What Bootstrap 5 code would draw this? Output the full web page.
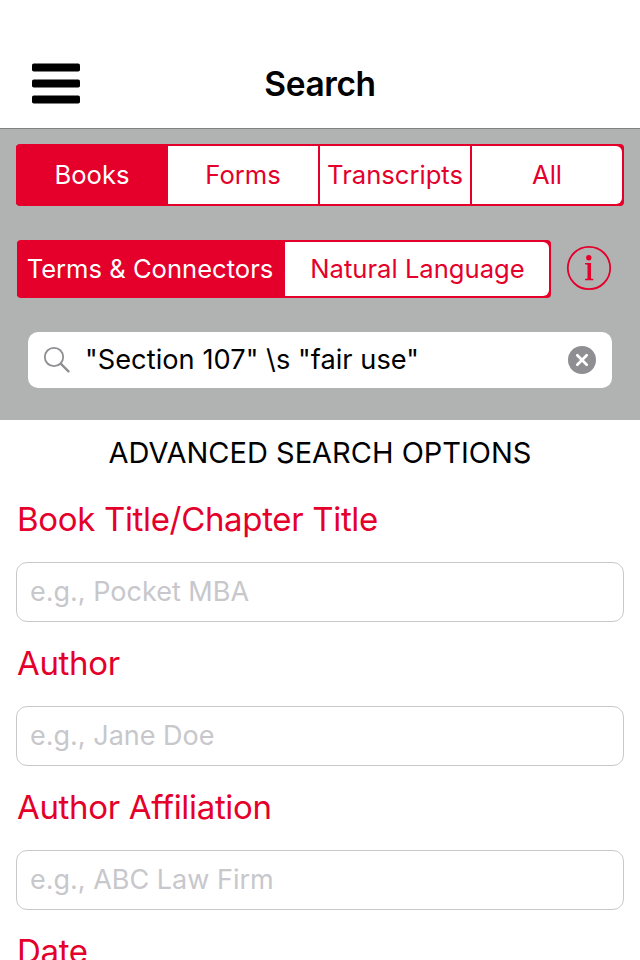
<!DOCTYPE html>
<html lang="en">
<head>
<meta charset="utf-8">
<meta name="viewport" content="width=device-width, initial-scale=1">
<title>Search</title>
<link rel="stylesheet" href="https://cdn.jsdelivr.net/npm/bootstrap@5.3.0/dist/css/bootstrap.min.css">
<style>
:root{--brand:#e4002b}
body{font-family:Inter,"Liberation Sans",sans-serif;width:640px;height:960px;overflow:hidden;color:#000;background:#fff}
.topbar{height:129px;padding-top:40px;border-bottom:1px solid #818282}
.menu-btn{left:32px;top:63px;width:48px;height:41px}
.page-title{font-size:33.5px;font-weight:600;line-height:88px;letter-spacing:-.4px}
.search-panel{background:#b1b3b3;height:291px;padding:15px 16px 32px}
.seg{display:grid;background:var(--brand);border-radius:4px;padding:2px 2px 2px 0}
.seg .btn{--bs-btn-color:var(--brand);--bs-btn-bg:#fff;--bs-btn-active-bg:var(--brand);--bs-btn-active-color:#fff;--bs-btn-border-width:0;--bs-btn-border-radius:0;--bs-btn-padding-x:0;--bs-btn-padding-y:0;font-size:25.6px;line-height:1;white-space:nowrap}
.seg .btn:not(.active):not(:last-child){border-right:2px solid var(--brand)}
.seg .btn:last-child{border-radius:0 6px 6px 0}
.seg-scope{height:62px;grid-template-columns:152px 152px 152px 150px}
.seg-mode{height:58px;width:534px;margin-left:1px;grid-template-columns:268px 264px}
.seg-mode .btn{padding-left:1px}
.seg-mode .btn.active{padding:0 2px 0 0}
.mode-row{margin-top:34px}
.info-btn{margin:-2px 0 0 15px}
.search-box{height:56px;margin:34px 12px 0;border-radius:10px;padding:0 16px 0 15px}
.query{font-size:27.2px;letter-spacing:.05px;margin:-1px 0 0 14px;line-height:1}
.adv-head{font-size:29px;line-height:40px;padding-top:13px}
.fields{padding-top:26px}
.field{padding:0 16px;height:144px}
.field-label{font-size:33px;line-height:40px;letter-spacing:-.33px;color:var(--brand);padding-left:1px}
.field .form-control{height:60px;margin-top:23px;border:1px solid #c9c9cb;border-radius:11px;padding:0 13px 2px;font-size:27px}
.field .form-control::placeholder{color:#c7c7cc;opacity:1}
</style>
<script src="https://cdn.jsdelivr.net/npm/bootstrap@5.3.0/dist/js/bootstrap.bundle.min.js"></script>
</head>
<body>
<header class="topbar position-relative text-center">
<svg class="menu-btn position-absolute" viewBox="0 0 48 41"><rect y=".4" width="48" height="8.200" rx="1.800"/><rect y="16.400" width="48" height="8.200" rx="1.800"/><rect y="32.400" width="48" height="8.200" rx="1.800"/></svg>
<h1 class="page-title m-0">Search</h1>
</header>
<section class="search-panel">
<div class="seg seg-scope"><button class="btn active">Books</button><button class="btn">Forms</button><button class="btn">Transcripts</button><button class="btn">All</button></div>
<div class="mode-row d-flex align-items-center"><div class="seg seg-mode"><button class="btn active">Terms &amp; Connectors</button><button class="btn">Natural Language</button></div>
<svg class="info-btn" width="46" height="46" viewBox="0 0 46 46"><circle cx="23" cy="23" r="21.200" fill="none" stroke="#e4002b" stroke-width="1.800"/><circle cx="22.800" cy="12.700" r="2.700" fill="#e4002b"/><path d="M19 18H25V33.500L27.300 34V35.200H19V34L21.500 33.500V19.700L19 19.200Z" fill="#e4002b"/></svg></div>
<div class="search-box bg-white d-flex align-items-center"><svg width="28" height="28" viewBox="0 0 28 28" fill="none" stroke="#8e8e93"><circle cx="11" cy="11" r="9.200" stroke-width="1.800"/><path d="M17.700 17.700L25.500 25.300" stroke-width="2.400" stroke-linecap="round"/></svg><span class="query">"Section 107" \s "fair use"</span><svg class="ms-auto" width="28" height="28" viewBox="0 0 28 28"><circle cx="14" cy="14" r="14" fill="#8e8e93"/><path d="M9.300 9.300L18.700 18.700M18.700 9.300L9.300 18.700" stroke="#fff" stroke-width="2.700" stroke-linecap="round"/></svg></div>
</section>
<main>
<h2 class="adv-head text-center fw-normal m-0">ADVANCED SEARCH OPTIONS</h2>
<form class="fields">
<div class="field"><label class="field-label" for="title">Book Title/Chapter Title</label><input id="title" class="form-control" placeholder="e.g., Pocket MBA"></div>
<div class="field"><label class="field-label" for="author">Author</label><input id="author" class="form-control" placeholder="e.g., Jane Doe"></div>
<div class="field"><label class="field-label" for="affil">Author Affiliation</label><input id="affil" class="form-control" placeholder="e.g., ABC Law Firm"></div>
<div class="field"><label class="field-label">Date</label></div>
</form>
</main>
</body>
</html>
